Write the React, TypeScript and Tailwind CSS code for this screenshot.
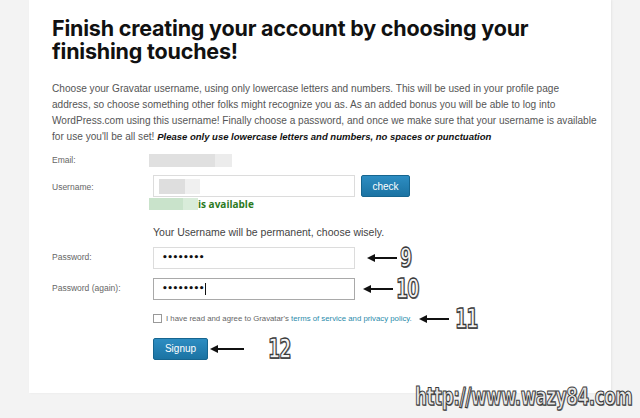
import React from 'react';

const Arrow = ({ width }: { width: number }) => (
  <svg width={width} height="10" viewBox={`0 0 ${width} 10`} className="shrink-0">
    <line x1="6" y1="5" x2={width} y2="5" stroke="#111" strokeWidth="2" />
    <path d="M0 5 L8 1 L8 9 Z" fill="#111" />
  </svg>
);

const Marker = ({ label }: { label: string }) => (
  <span className="inline-block origin-left scale-x-[0.74] font-['DejaVu_Sans_Condensed',sans-serif] text-[26px] font-bold leading-none tracking-[-1px] text-[#f4f4f4] [-webkit-text-stroke:1.3px_#3a3a3a] [text-shadow:1px_1px_0_#888]">
    {label}
  </span>
);

const TextInput = ({ value, dark, caret }: { value?: string; dark?: boolean; caret?: boolean }) => (
  <div
    className={`flex h-[22px] w-[202px] items-center border bg-white pl-[8px] ${dark ? 'border-[#a9a9a9]' : 'border-[#dcdcdc]'}`}
  >
    {value && (
      <span className="font-['DejaVu_Sans',sans-serif] text-[9px] font-bold tracking-[-0.5px] text-[#111]">{value}</span>
    )}
    {caret && <span className="ml-[1px] h-[12px] w-px bg-[#111]" />}
  </div>
);

export default function App() {
  return (
    <div className="relative h-[418px] w-[640px] overflow-hidden bg-[#f3f3f3] font-['Liberation_Sans',Arial,sans-serif]">
      <div className="ml-[29px] h-[393px] w-[582px] bg-white pl-[23px] pr-[14px] pt-[17px] shadow-[1px_0_2px_rgba(0,0,0,0.06)]">
        <h1 className="font-['Inter',sans-serif] text-[21.5px] font-bold leading-[23px] tracking-[-0.2px] text-[#111]">
          Finish creating your account by choosing your
          <br />
          finishing touches!
        </h1>

        <p className="mt-[18px] text-[10.1px] leading-[16px] text-[#555]">
          Choose your Gravatar username, using only lowercase letters and numbers. This will be used in your profile page
          <br />
          address, so choose something other folks might recognize you as. As an added bonus you will be able to log into
          <br />
          WordPress.com using this username! Finally choose a password, and once we make sure that your username is available
          <br />
          for use you'll be all set!{' '}
          <b className="text-[9.5px] italic font-bold text-[#111]">
            Please only use lowercase letters and numbers, no spaces or punctuation
          </b>
        </p>

        <div className="mt-[9px] flex items-center text-[8.5px] text-[#666]">
          <span className="w-[97px]">Email:</span>
          <div className="flex h-[13px]">
            <span className="w-[66px] bg-[#e0e0e0]" />
            <span className="w-[17px] bg-[#ececec]" />
          </div>
        </div>

        <div className="mt-[8px] flex items-start text-[8.5px] text-[#666]">
          <span className="mt-[6px] w-[101px]">Username:</span>
          <div className="flex flex-col">
            <div className="flex gap-[6px]">
              <div className="flex h-[22px] w-[202px] items-center border border-[#dcdcdc] bg-white pl-[5px]">
                <span className="h-[15px] w-[26px] bg-[#dedede]" />
                <span className="h-[15px] w-[15px] bg-[#f0f0f0]" />
              </div>
              <button className="h-[22px] w-[49px] rounded-[2px] border border-[#16658f] bg-[linear-gradient(#2d8dc2,#1b73a3)] text-[10px] text-white">
                check
              </button>
            </div>
            <div className="-ml-[4px] mt-[1px] flex items-center">
              <span className="h-[12px] w-[34px] bg-[#c9e3cb]" />
              <span className="h-[12px] w-[15px] bg-[#d9ecda]" />
              <span className="font-['Open_Sans',sans-serif] text-[10px] font-bold leading-none text-[#2d7a1e]">is available</span>
            </div>
            <p className="mt-[15px] text-[10.5px] text-[#444]">Your Username will be permanent, choose wisely.</p>
          </div>
        </div>

        <div className="mt-[6px] flex items-center text-[8.5px] text-[#666]">
          <span className="w-[101px]">Password:</span>
          <TextInput value="••••••••" />
          <div className="ml-[12px] flex h-[22px] items-center gap-[3px]">
            <Arrow width={30} />
            <Marker label="9" />
          </div>
        </div>

        <div className="mt-[9px] flex items-center text-[8.5px] text-[#666]">
          <span className="w-[101px]">Password (again):</span>
          <TextInput value="••••••••" dark caret />
          <div className="ml-[8px] flex h-[22px] items-center gap-[3px]">
            <Arrow width={30} />
            <Marker label="10" />
          </div>
        </div>

        <div className="ml-[101px] mt-[12px] flex h-[14px] items-center">
          <span className="h-[9px] w-[9px] border border-[#999] bg-white" />
          <span className="ml-[4px] text-[7.8px] text-[#666]">
            I have read and agree to Gravatar's{' '}
            <span className="text-[#2a8bab]">terms of service and privacy policy.</span>
          </span>
          <div className="ml-[7px] flex h-[14px] items-center gap-[6px]">
            <Arrow width={30} />
            <Marker label="11" />
          </div>
        </div>

        <div className="ml-[101px] mt-[12px] flex items-center">
          <button className="h-[22px] w-[55px] rounded-[2px] border border-[#16658f] bg-[linear-gradient(#2d8dc2,#1b73a3)] text-[10px] text-white">
            Signup
          </button>
          <div className="ml-[2px] flex h-[22px] items-center gap-[24px]">
            <Arrow width={34} />
            <Marker label="12" />
          </div>
        </div>
      </div>

      <div className="absolute left-[415px] top-[384px] origin-left scale-x-[0.74] whitespace-nowrap font-['DejaVu_Sans_Condensed',sans-serif] text-[25px] font-bold leading-none tracking-[-0.5px] text-[#e8e8e8] [-webkit-text-stroke:1.1px_#3a3a3a] [text-shadow:1px_1px_0_#777]">
        http://www.wazy84.com
      </div>
    </div>
  );
}
